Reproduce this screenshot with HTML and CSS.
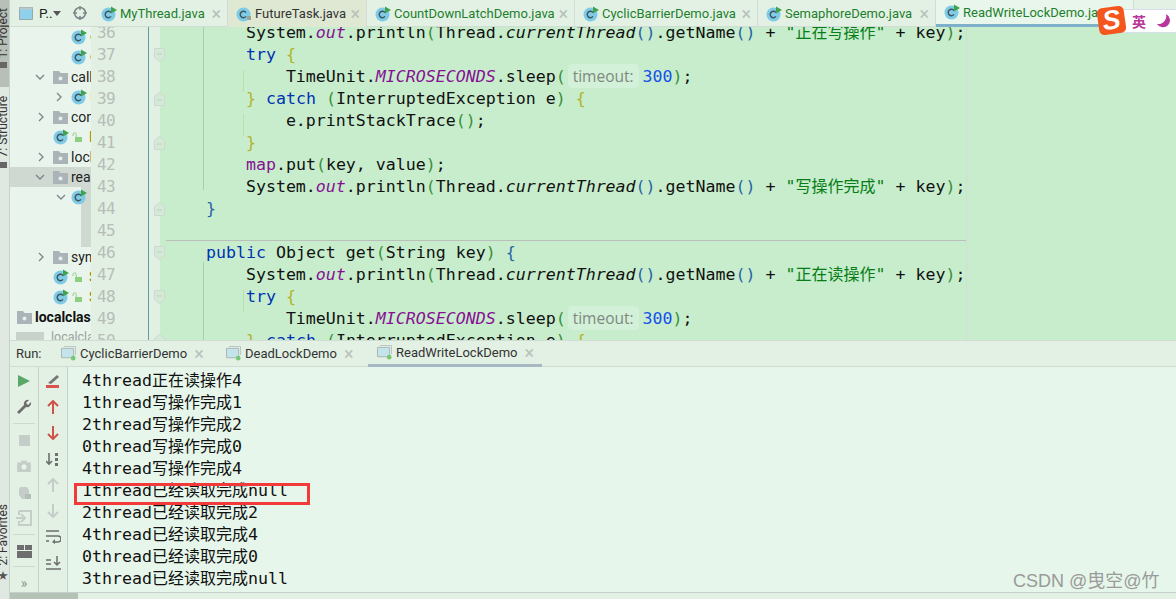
FILE: index.html
```html
<!DOCTYPE html>
<html lang="en">
<head>
<meta charset="utf-8">
<title>ReadWriteLockDemo</title>
<link rel="stylesheet" href="styles.css">
</head>
<body>
<svg class="defs" width="0" height="0">
  <symbol id="cls" viewBox="0 0 16 16">
    <circle cx="7.5" cy="8.5" r="7" fill="#7fcbe6"/>
    <path d="M10 6.6A3.2 3.2 0 1 0 10 10.4" fill="none" stroke="#3d5560" stroke-width="1.4"/>
    <path d="M10 0.5L16 4L10 7.5Z" fill="#3fa34d"/>
  </symbol>
  <symbol id="clsd" viewBox="0 0 16 16">
    <circle cx="7.5" cy="8.5" r="7" fill="#7fcbe6"/>
    <path d="M10 6.6A3.2 3.2 0 1 0 10 10.4" fill="none" stroke="#3d5560" stroke-width="1.4"/>
    <path d="M11 10h4v4h-4z" fill="#9aa59a"/>
  </symbol>
  <symbol id="folder" viewBox="0 0 15 13">
    <path d="M0 0h6l1.500 2H15v11H0z" fill="#aab3b8"/>
    <circle cx="7.500" cy="7.500" r="2" fill="#e6efe8"/>
  </symbol>
  <symbol id="lock" viewBox="0 0 10 10">
    <path d="M3 5h7v5H3z" fill="#8ccf7e"/>
    <path d="M1 4V2.500a1.600 1.600 0 0 1 3.200 0V5" fill="none" stroke="#8ccf7e" stroke-width="1"/>
  </symbol>
  <symbol id="chev-d" viewBox="0 0 10 6"><path d="M1 1l4 4 4-4" fill="none" stroke="#7b8589" stroke-width="1.300"/></symbol>
  <symbol id="chev-r" viewBox="0 0 6 10"><path d="M1 1l4 4-4 4" fill="none" stroke="#7b8589" stroke-width="1.300"/></symbol>
  <symbol id="fold-d" viewBox="0 0 11 14"><path d="M.5.500h10v9l-5 4-5-4z" fill="#d3ebd6" stroke="#cfd8cf"/><path d="M3 6h5" stroke="#c3cdc3"/></symbol>
  <symbol id="fold-u" viewBox="0 0 11 14"><path d="M.5 13.500h10v-9l-5-4-5 4z" fill="#d3ebd6" stroke="#cfd8cf"/><path d="M3 8h5" stroke="#c3cdc3"/></symbol>
  <symbol id="run-cfg" viewBox="0 0 16 16">
    <path d="M.5 2.500h13v10H.5z" fill="#c4e3ea" stroke="#a9b3b3"/>
    <path d="M3 .5h12.500v9" fill="none" stroke="#b9c2c2"/>
    <circle cx="13" cy="13" r="2.500" fill="#78c878"/>
  </symbol>
</svg>

<div class="app">
  <aside class="rail">
    <div class="rail-active"><span class="rail-text">1: Project</span><i class="rail-chip"></i></div>
    <div class="rail-mid"><span class="rail-text">7: Structure</span><i class="rail-chip"></i></div>
    <div class="rail-fav"><span class="rail-text">2: Favorites</span><span class="rail-star">★</span></div>
  </aside>

  <div class="main">
    <div class="upper">
      <nav class="project">
        <div class="project-head">
          <svg class="head-icon" width="14" height="13" viewBox="0 0 14 13"><path d="M.5.500h13v12H.5z" fill="#8fd0ea" stroke="#9aa7ad"/><path d="M.5.500h13v2H.5z" fill="#bcc8cc"/></svg>
          <span class="head-title">P..</span>
          <svg class="head-drop" width="8" height="5" viewBox="0 0 8 5"><path d="M0 0h8L4 5z" fill="#555"/></svg>
          <svg class="head-target" width="14" height="14" viewBox="0 0 14 14"><circle cx="7" cy="7" r="5.500" fill="none" stroke="#7b8589" stroke-width="1.600"/><path d="M7 0v4M7 10v4M0 7h4M10 7h4" stroke="#7b8589" stroke-width="1.600"/></svg>
        </div>
        <div class="tree">
          <div class="row ind-file"><svg class="ic16"><use href="#cls"/></svg><span class="t-green">c</span></div>
          <div class="row ind-file"><svg class="ic16"><use href="#cls"/></svg><span class="t-green">c</span></div>
          <div class="row ind-dir"><svg class="chev-d"><use href="#chev-d"/></svg><svg class="ic-folder"><use href="#folder"/></svg><span>callable</span></div>
          <div class="row ind-sub"><svg class="chev-r"><use href="#chev-r"/></svg><svg class="ic16"><use href="#cls"/></svg><span class="t-olive">M</span></div>
          <div class="row ind-dir"><svg class="chev-r r-dir"><use href="#chev-r"/></svg><svg class="ic-folder"><use href="#folder"/></svg><span>concurrent</span></div>
          <div class="row ind-leaf"><svg class="ic16"><use href="#cls"/></svg><svg class="ic-lock"><use href="#lock"/></svg><span class="t-olive">D</span></div>
          <div class="row ind-dir"><svg class="chev-r r-dir"><use href="#chev-r"/></svg><svg class="ic-folder"><use href="#folder"/></svg><span>lock</span></div>
          <div class="row ind-dir row-sel"><svg class="chev-d"><use href="#chev-d"/></svg><svg class="ic-folder"><use href="#folder"/></svg><span>readwrite</span></div>
          <div class="row ind-sub row-edge"><svg class="chev-d sub-d"><use href="#chev-d"/></svg><svg class="ic16"><use href="#cls"/></svg></div>
          <div class="row row-edge"></div>
          <div class="row row-edge"></div>
          <div class="row ind-dir"><svg class="chev-r r-dir"><use href="#chev-r"/></svg><svg class="ic-folder"><use href="#folder"/></svg><span>sync</span></div>
          <div class="row ind-leaf"><svg class="ic16"><use href="#cls"/></svg><svg class="ic-lock"><use href="#lock"/></svg><span class="t-olive">S</span></div>
          <div class="row ind-leaf"><svg class="ic16"><use href="#cls"/></svg><svg class="ic-lock"><use href="#lock"/></svg><span class="t-olive">S</span></div>
          <div class="row ind-root"><svg class="ic-folder"><use href="#folder"/></svg><b>localclass</b></div>
          <div class="row ind-root row-gray"><svg class="ic-file" viewBox="0 0 28 10"><path d="M0 0h28v14H0z" fill="#c8d2ca"/></svg><span>localclass</span></div>
        </div>
      </nav>

      <section class="editor">
        <div class="tabs">
          <div class="tab w1"><svg class="ic16"><use href="#cls"/></svg><span class="tab-name">MyThread.java</span><span class="x">×</span></div>
          <div class="tab w2"><svg class="ic16"><use href="#clsd"/></svg><span class="tab-name dark">FutureTask.java</span><span class="x">×</span></div>
          <div class="tab w3"><svg class="ic16"><use href="#cls"/></svg><span class="tab-name">CountDownLatchDemo.java</span><span class="x">×</span></div>
          <div class="tab w4"><svg class="ic16"><use href="#cls"/></svg><span class="tab-name">CyclicBarrierDemo.java</span><span class="x">×</span></div>
          <div class="tab w5"><svg class="ic16"><use href="#cls"/></svg><span class="tab-name">SemaphoreDemo.java</span><span class="x">×</span></div>
          <div class="tab w6"><svg class="ic16"><use href="#cls"/></svg><span class="tab-name">ReadWriteLockDemo.java</span></div>
          <div class="tab-rest"></div>
        </div>
        <div class="edit-body">
          <div class="gutter">
            <div class="g"><span class="num">36</span><span class="fold"></span></div>
            <div class="g"><span class="num">37</span><span class="fold"><svg class="fm"><use href="#fold-d"/></svg></span></div>
            <div class="g"><span class="num">38</span><span class="fold"></span></div>
            <div class="g"><span class="num">39</span><span class="fold"><svg class="fm"><use href="#fold-u"/></svg></span></div>
            <div class="g"><span class="num">40</span><span class="fold"></span></div>
            <div class="g"><span class="num">41</span><span class="fold"><svg class="fm"><use href="#fold-u"/></svg></span></div>
            <div class="g"><span class="num">42</span><span class="fold"></span></div>
            <div class="g"><span class="num">43</span><span class="fold"></span></div>
            <div class="g"><span class="num">44</span><span class="fold"><svg class="fm"><use href="#fold-u"/></svg></span></div>
            <div class="g"><span class="num">45</span><span class="fold"></span></div>
            <div class="g"><span class="num">46</span><span class="fold"><svg class="fm"><use href="#fold-d"/></svg></span></div>
            <div class="g"><span class="num">47</span><span class="fold"></span></div>
            <div class="g"><span class="num">48</span><span class="fold"><svg class="fm"><use href="#fold-d"/></svg></span></div>
            <div class="g"><span class="num">49</span><span class="fold"></span></div>
            <div class="g"><span class="num">50</span><span class="fold"><svg class="fm"><use href="#fold-u"/></svg></span></div>
          </div>
          <div class="code">
            <i class="guide guide-a"></i><i class="guide guide-b"></i><i class="guide guide-c"></i><i class="guide guide-d"></i><i class="guide guide-e"></i><i class="margin"></i><i class="method-sep"></i>
<pre class="lines"><code>        System.<span class="f">out</span>.println<span class="b1">(</span>Thread.<span class="i">currentThread</span><span class="b2">()</span>.getName<span class="b2">()</span> + <span class="s">"<span class="cj">正在写操作</span>"</span> + key<span class="b1">)</span>;
        <span class="k">try</span> <span class="b3">{</span>
            TimeUnit.<span class="f">MICROSECONDS</span>.sleep<span class="b1">(</span><span class="hint">timeout:</span><span class="n">300</span><span class="b1">)</span>;
        <span class="b3">}</span> <span class="k">catch</span> <span class="b1">(</span>InterruptedException e<span class="b1">)</span> <span class="b3">{</span>
            e.printStackTrace<span class="b1">()</span>;
        <span class="b3">}</span>
        <span class="m">map</span>.put<span class="b1">(</span>key, value<span class="b1">)</span>;
        System.<span class="f">out</span>.println<span class="b1">(</span>Thread.<span class="i">currentThread</span><span class="b2">()</span>.getName<span class="b2">()</span> + <span class="s">"<span class="cj">写操作完成</span>"</span> + key<span class="b1">)</span>;
    <span class="b2">}</span>

    <span class="k">public</span> Object get<span class="b1">(</span>String key<span class="b1">)</span> <span class="b2">{</span>
        System.<span class="f">out</span>.println<span class="b1">(</span>Thread.<span class="i">currentThread</span><span class="b2">()</span>.getName<span class="b2">()</span> + <span class="s">"<span class="cj">正在读操作</span>"</span> + key<span class="b1">)</span>;
        <span class="k">try</span> <span class="b3">{</span>
            TimeUnit.<span class="f">MICROSECONDS</span>.sleep<span class="b1">(</span><span class="hint">timeout:</span><span class="n">300</span><span class="b1">)</span>;
        <span class="b3">}</span> <span class="k">catch</span> <span class="b1">(</span>InterruptedException e<span class="b1">)</span> <span class="b3">{</span></code></pre>
          </div>
        </div>
      </section>
    </div>

    <section class="run">
      <div class="run-head">
        <span class="run-label">Run:</span>
        <div class="run-tab rt1"><svg class="ic-run"><use href="#run-cfg"/></svg><span>CyclicBarrierDemo</span><span class="x">×</span></div>
        <div class="run-tab rt2"><svg class="ic-run"><use href="#run-cfg"/></svg><span>DeadLockDemo</span><span class="x">×</span></div>
        <div class="run-tab rt3"><svg class="ic-run"><use href="#run-cfg"/></svg><span>ReadWriteLockDemo</span><span class="x">×</span></div>
      </div>
      <div class="run-body">
        <div class="bar">
          <div class="tool"><svg width="14" height="16" viewBox="0 0 14 16"><path d="M1 2l12 6-12 6z" fill="#59a869"/></svg></div>
          <div class="tool"><svg width="16" height="16" viewBox="0 0 16 16"><path d="M15 3l-3 3-2-2 3-3a4 4 0 0 0-5 5L1 13l2 2 7-7a4 4 0 0 0 5-5z" fill="#6e6e6e"/></svg></div>
          <hr class="sep">
          <div class="tool"><svg width="11" height="11"><rect width="11" height="11" fill="#c5cdc8"/></svg></div>
          <div class="tool"><svg width="14" height="12" viewBox="0 0 16 14"><path d="M0 3h4l1-2h6l1 2h4v11H0z" fill="#c5cdc8"/><circle cx="8" cy="8" r="3" fill="#e6f6ea"/></svg></div>
          <div class="tool"><svg width="16" height="16" viewBox="0 0 16 16"><path d="M4 3h7l2 3v5l-3 4H6l-3-4V6z" fill="#c5cdc8"/><path d="M9 10h6v5H9z" fill="#b5bfb9"/></svg></div>
          <div class="tool"><svg width="16" height="16" viewBox="0 0 16 16"><path d="M3 1h12v14H3v-4M3 5V1" fill="none" stroke="#c5cdc8" stroke-width="2"/><path d="M0 8h7M5 4l4 4-4 4" fill="none" stroke="#c5cdc8" stroke-width="2"/></svg></div>
          <hr class="sep">
          <div class="tool"><svg width="15" height="13" viewBox="0 0 15 13"><path d="M0 0h7v5H0zM8 0h7v5H8zM0 6h15v7H0z" fill="#6e6e6e"/></svg></div>
          <hr class="sep sep-low">
          <div class="more">»</div>
        </div>
        <div class="bar bar2">
          <div class="tool"><svg width="16" height="14" viewBox="0 0 16 14"><path d="M3 9l9-8 2 2-8 7z" fill="#777"/><path d="M1 11h13v3H1z" fill="#d9534f"/></svg></div>
          <div class="tool"><svg width="12" height="14" viewBox="0 0 12 14"><path d="M6 14V2M1 6l5-5 5 5" fill="none" stroke="#d05248" stroke-width="2"/></svg></div>
          <div class="tool"><svg width="12" height="14" viewBox="0 0 12 14"><path d="M6 0v12M1 8l5 5 5-5" fill="none" stroke="#d05248" stroke-width="2"/></svg></div>
          <div class="tool"><svg width="14" height="14" viewBox="0 0 14 14"><path d="M3 1v11M0 9l3 3 3-3" fill="none" stroke="#6e6e6e" stroke-width="1.600"/><path d="M9 1h3v3H9zM9 6h3v3H9zM9 11h3v3H9z" fill="#6e6e6e"/></svg></div>
          <div class="tool"><svg width="12" height="14" viewBox="0 0 12 14"><path d="M6 14V2M1 6l5-5 5 5" fill="none" stroke="#c5cdc8" stroke-width="2"/></svg></div>
          <div class="tool"><svg width="12" height="14" viewBox="0 0 12 14"><path d="M6 0v12M1 8l5 5 5-5" fill="none" stroke="#c5cdc8" stroke-width="2"/></svg></div>
          <div class="tool"><svg width="15" height="14" viewBox="0 0 15 14"><path d="M0 1h13M0 6h12a2.500 2.500 0 0 1 0 6H7M0 11h3" fill="none" stroke="#6e6e6e" stroke-width="1.500"/><path d="M9 9l-3 3 3 2z" fill="#6e6e6e"/></svg></div>
          <div class="tool"><svg width="15" height="14" viewBox="0 0 15 14"><path d="M0 4h5M0 8h5M0 13h15M11 0v9M8 6l3 3 3-3" fill="none" stroke="#6e6e6e" stroke-width="1.500"/></svg></div>
          <div class="more more2">»</div>
        </div>
        <pre class="console"><code>4thread<span class="cj">正在读操作</span>4
1thread<span class="cj">写操作完成</span>1
2thread<span class="cj">写操作完成</span>2
0thread<span class="cj">写操作完成</span>0
4thread<span class="cj">写操作完成</span>4
1thread<span class="cj">已经读取完成</span>null
2thread<span class="cj">已经读取完成</span>2
4thread<span class="cj">已经读取完成</span>4
0thread<span class="cj">已经读取完成</span>0
3thread<span class="cj">已经读取完成</span>null</code></pre>
      </div>
    </section>

    <div class="status"><i class="thumb"></i></div>
  </div>
</div>

<div class="ime">
  <span class="ime-logo"><span>S</span></span>
  <span class="ime-box"><span class="ime-zh">英</span><svg class="ime-moon" width="14" height="14" viewBox="0 0 14 14"><path d="M9 0a7 7 0 1 1-9 10A8 8 0 0 0 9 0z" fill="#b8359c"/></svg></span>
</div>
<div class="redbox"></div>
<div class="mark">CSDN @曳空@竹</div>
</body>
</html>
```

FILE: styles.css
```css
* { box-sizing: border-box; }
html, body { margin: 0; padding: 0; }
body {
  width: 1176px;
  height: 599px;
  overflow: hidden;
  position: relative;
  font-family: Roboto, "Noto Sans", "Noto Sans CJK SC", sans-serif;
  color: #222;
  background: #e6f6ea;
}
.defs { position: absolute; }
.app { display: flex; width: 1176px; height: 599px; }

/* left rail */
.rail {
  width: 10px;
  flex: none;
  display: flex;
  flex-direction: column;
  background: #e0e9e1;
  border-right: 1px solid #c9d2ca;
  overflow: hidden;
}
.rail-text {
  writing-mode: vertical-rl;
  transform: rotate(180deg);
  font-size: 12px;
  line-height: 9px;
  width: 9px;
  margin-left: -1px;
  color: #333;
  white-space: nowrap;
}
.rail-active {
  height: 87px;
  background: #b7bfb8;
  display: flex;
  flex-direction: column;
  padding-top: 8px;
  gap: 4px;
}
.rail-chip { width: 7px; height: 6px; background: #666; display: block; }
.rail-mid {
  display: flex;
  flex-direction: column;
  padding-top: 9px;
  gap: 4px;
}
.rail-fav {
  margin-top: auto;
  display: flex;
  flex-direction: column;
  align-items: flex-start;
  padding-bottom: 17px;
  gap: 4px;
}
.rail-star { font-size: 10px; line-height: 12px; margin-left: -2px; color: #555; }

.main { flex: 1; display: flex; flex-direction: column; min-width: 0; }
.upper { height: 340px; display: flex; flex: none; overflow: hidden; }

/* project panel */
.project {
  width: 81px;
  flex: none;
  background: #e9f5ec;
  overflow: hidden;
  position: relative;
  z-index: 1;
}
.project-head {
  height: 27px;
  display: flex;
  align-items: center;
  padding-left: 9px;
  background: #e3f1e5;
  border-bottom: 1px solid #d3dcd4;
}
.head-title { font-size: 13.500px; margin-left: 6px; width: 15px; }
.head-drop { margin-left: -1px; }
.head-target { margin-left: 12px; }
.tree { width: 81px; }
.row {
  height: 20px;
  display: flex;
  align-items: center;
  font-size: 14px;
  white-space: nowrap;
  overflow: hidden;
  line-height: 20px;
}
.ic16 { width: 16px; height: 16px; flex: none; }
.ind-file { padding-left: 61px; }
.ind-file span { margin-left: 3px; font-size: 11px; }
.ind-dir { padding-left: 25px; }
.ind-sub { padding-left: 44px; }
.ind-leaf { padding-left: 43px; }
.ind-root { padding-left: 7px; }
.row-sel { background: #d0d8d2; }
.row-edge { background: linear-gradient(to right, #e9f5ec 0, #e9f5ec 71px, #d0d8d2 71px); }
.chev-d { width: 10px; height: 6px; flex: none; margin-right: 8px; }
.sub-d { margin-left: 2px; margin-right: 5px; }
.chev-r { width: 6px; height: 10px; flex: none; margin-right: 11px; }
.r-dir { margin-left: 3px; margin-right: 9px; }
.ind-sub .chev-r { margin-left: 2px; margin-right: 9px; }
.ic-folder { width: 15px; height: 13px; flex: none; margin-right: 3px; }
.ic-lock { width: 10px; height: 10px; flex: none; margin: 0 7px 0 3px; }
.ind-sub .ic16 + span { margin-left: 3px; }
.t-green { color: #3f9a4a; }
.t-olive { color: #8a8a00; }
.ind-root b { font-weight: 700; color: #111; }
.row-gray { color: #9aa39c; font-size: 12.500px; }
.ic-file { width: 28px; height: 14px; flex: none; margin-left: -1px; }
.row-gray span { margin-left: 7px; }

/* editor */
.editor { flex: 1; display: flex; flex-direction: column; min-width: 0; }
.tabs {
  height: 27px;
  flex: none;
  display: flex;
  background: #e3f1e5;
  border-bottom: 1px solid #d3dcd4;
  position: relative;
  z-index: 2;
}
.tab {
  display: flex;
  align-items: center;
  padding: 0 6px 0 8px;
  border-right: 1px solid #d3dcd4;
  font-size: 13px;
  white-space: nowrap;
  height: 27px;
  flex: none;
  overflow: hidden;
}
.tab-name { color: #1d7f2c; margin-left: 3px; }
.tab-name.dark { color: #333; }
.x { color: #b9c2bc; font-size: 18px; line-height: 17px; }
.tab .x { margin-left: auto; }
.w1 { width: 137px; padding-left: 10px; }
.w2 { width: 139px; background: #dfe8d3; }
.w3 { width: 208px; }
.w4 { width: 183px; }
.w5 { width: 178px; }
.w6 { width: 198px; border-bottom: 3px solid #7fb0c9; background: #e8f6ec; }
.tab-rest { flex: 1; }

.edit-body { display: flex; flex: 1; min-height: 0; background: #c7edcc; }
.gutter { width: 69px; flex: none; margin-top: -5px; overflow: visible; }
.g { display: flex; height: 22px; }
.num {
  width: 58px;
  background: #e2f0e3;
  border-right: 1px solid #5f9ea0;
  padding-left: 6px;
  font: 16px/22px "DejaVu Sans Mono", monospace;
  letter-spacing: -.6px;
  color: #b7bdb8;
}
.fold { width: 11px; background: #e2f0e3; display: flex; align-items: center; justify-content: center; overflow: visible; position: relative; z-index: 1; }
.fm { width: 11px; height: 14px; flex: none; overflow: visible; transform: translateX(5px); }

.code { flex: 1; position: relative; overflow: hidden; min-width: 0; }
.lines {
  margin: -5px 0 0;
  padding-left: 6px;
  font: 16.600px/22px "DejaVu Sans Mono", "Noto Sans CJK SC", monospace;
  color: #111;
}
.lines code, .console code { font: inherit; }
.cj { font-family: "Noto Sans CJK SC", sans-serif; font-size: 16px; line-height: 0; }
.k { color: #0033b3; }
.f { color: #871094; font-style: italic; }
.i { font-style: italic; }
.m { color: #871094; }
.s { color: #067d17; }
.n { color: #1750eb; }
.b1 { color: #3b8f3b; }
.b2 { color: #2a62a8; }
.b3 { color: #b3b32a; }
.hint {
  font: 15.500px/0 "Open Sans", sans-serif;
  color: #7d8a80;
  background: #d3f0d8;
  border-radius: 4px;
  padding: 1px 5px;
  margin: 0 4px 0 2px;
}
.guide { position: absolute; width: 1px; display: block; }
.guide-a { left: 43px; top: 0; height: 163px; background: #a3cdb4; }
.guide-e { left: 43px; top: 235px; height: 80px; background: #a3cdb4; }
.guide-b { left: 83px; top: 43px; height: 22px; background: #b6e0a8; }
.guide-c { left: 83px; top: 87px; height: 22px; background: #b6e0a8; }
.guide-d { left: 83px; top: 263px; height: 22px; background: #b6e0a8; }
.margin { position: absolute; left: 806px; top: 0; bottom: 0; width: 1px; background: #d5dcd7; }
.method-sep { position: absolute; left: 6px; width: 800px; top: 213px; height: 1px; background: #b9bfbb; }

/* run panel */
.run { flex: 1; display: flex; flex-direction: column; min-height: 0; background: #e6f6ea; }
.run-head {
  height: 27px;
  flex: none;
  display: flex;
  align-items: center;
  background: #e3f1e5;
  border-top: 1px solid #d3dcd4;
  border-bottom: 1px solid #d3dcd4;
  font-size: 13px;
}
.run-label { width: 42px; padding-left: 6px; color: #333; }
.run-tab { height: 27px; display: flex; align-items: center; padding-left: 9px; color: #333; white-space: nowrap; flex: none; }
.ic-run { width: 15px; height: 15px; flex: none; margin-right: 4px; }
.run-tab .x { margin-left: 7px; }
.rt1 { width: 165px; }
.rt2 { width: 151px; }
.rt3 { width: 174px; border-bottom: 3px solid #a5b8c4; }
.run-body { flex: 1; display: flex; min-height: 0; }
.bar {
  width: 29px;
  flex: none;
  display: flex;
  flex-direction: column;
  padding-top: 1px;
  background: #e3f1e5;
  border-right: 1px solid #c9d2ca;
}
.tool { height: 26px; display: flex; align-items: center; justify-content: center; flex: none; }
.sep { border: 0; height: 1px; width: 22px; margin: 3px auto 3px; background: #cfd7d1; flex: none; padding: 0; }
.sep-low { margin-top: 2px; }
.more { color: #8d9690; font-size: 14px; line-height: 18px; text-align: center; margin-top: 4px; }
.more2 { margin-top: 9px; }
.console {
  margin: 0;
  padding: 3px 0 0 14px;
  flex: 1;
  font: 16.600px/22px "DejaVu Sans Mono", "Noto Sans CJK SC", monospace;
  color: #111;
}
.status {
  height: 7px;
  flex: none;
  background: #e3f1e5;
  border-top: 1px solid #c9cfc9;
}
.thumb { display: block; width: 68px; height: 6px; background: #b5c2b6; }

/* overlays */
.ime { position: absolute; z-index: 5; left: 1095px; top: 5px; width: 81px; height: 31px; display: flex; align-items: center; }
.ime-logo {
  position: absolute; left: 3px; top: 2px; z-index: 1;
  width: 27px; height: 27px;
  background: #f5561d;
  border-radius: 5px;
  transform: rotate(-8deg);
  display: flex; align-items: center; justify-content: center;
  color: #fff; font: italic 700 27px/27px "Liberation Sans", sans-serif;
}
.ime-box {
  margin-left: 15px;
  flex: 1;
  height: 24px;
  background: #fff;
  border: 1px solid #d8dcef;
  border-right: 0;
  display: flex;
  align-items: center;
  padding-left: 21px;
}
.ime-zh { font: 700 14px/20px "Noto Sans CJK SC", sans-serif; color: #b8359c; }
.ime-moon { margin-left: 11px; }
.redbox { position: absolute; z-index: 5; left: 74px; top: 483px; width: 236px; height: 22px; border: 3px solid #f23a3a; }
.mark { position: absolute; z-index: 5; left: 1013px; top: 569px; font: 18px/24px "Liberation Sans", "Noto Sans CJK SC", sans-serif; color: #9a9a9a; white-space: nowrap; }
```
